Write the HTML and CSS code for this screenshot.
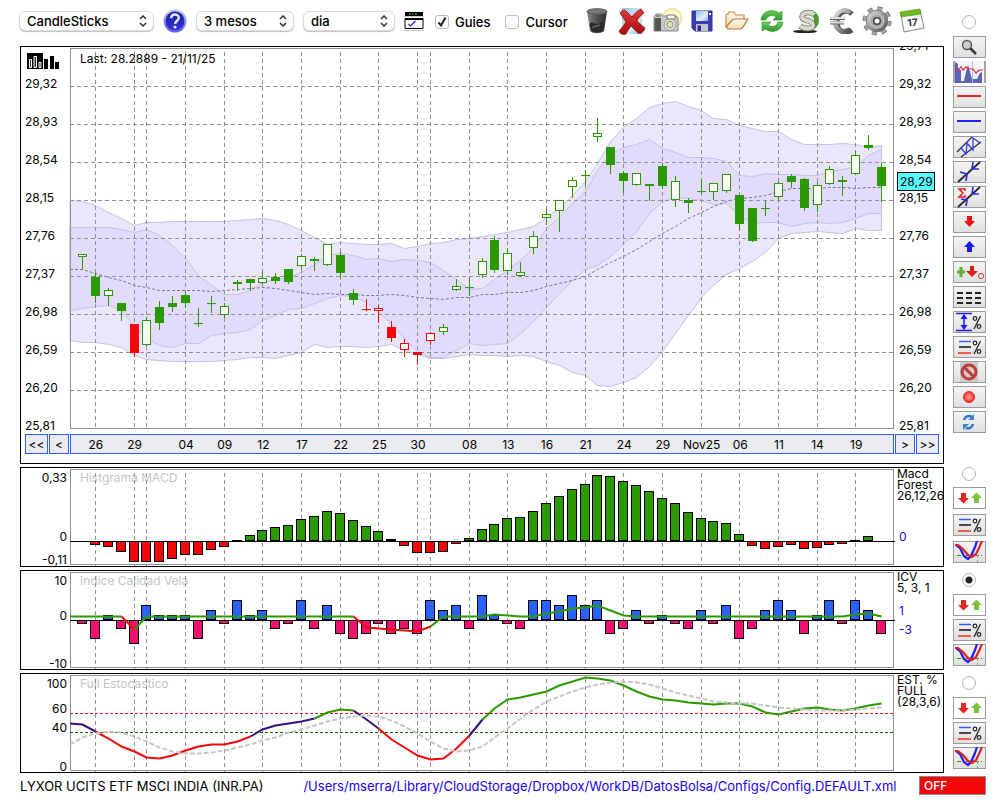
FILE: index.html
```html
<!DOCTYPE html>
<html lang="ca">
<head>
    <meta charset="utf-8">
    <title>LYXOR UCITS ETF MSCI INDIA (INR.PA)</title>
    <link rel="stylesheet" href="styles.css">
</head>
<body>

<!-- shared icons -->
<svg class="defs" aria-hidden="true">
    <defs>
        <linearGradient id="gHelp" x1="0" y1="0" x2="0" y2="1"><stop offset="0" stop-color="#1c1c9c"/><stop offset="1" stop-color="#3434d8"/></linearGradient>
        <linearGradient id="gHelpRim" x1="0" y1="0" x2="0" y2="1"><stop offset="0" stop-color="#c4c8f4"/><stop offset="1" stop-color="#5c60ee"/></linearGradient>
        <linearGradient id="gTrash" x1="0" y1="0" x2="1" y2="0"><stop offset="0" stop-color="#8a8a8a"/><stop offset=".5" stop-color="#505050"/><stop offset="1" stop-color="#2c2c2c"/></linearGradient>
        <linearGradient id="gSky" x1="0" y1="0" x2="1" y2="1"><stop offset="0" stop-color="#8fc0f5"/><stop offset=".6" stop-color="#e2f0fd"/><stop offset="1" stop-color="#7fb2ee"/></linearGradient>
        <linearGradient id="gRed" x1="0" y1="0" x2="0" y2="1"><stop offset="0" stop-color="#e33a3a"/><stop offset="1" stop-color="#a80c10"/></linearGradient>
        <linearGradient id="gGreen" x1="0" y1="0" x2="0" y2="1"><stop offset="0" stop-color="#6cd05a"/><stop offset="1" stop-color="#2a9a2c"/></linearGradient>
        <linearGradient id="gSteel" x1="0" y1="0" x2="1" y2="1"><stop offset="0" stop-color="#e8e8e8"/><stop offset=".5" stop-color="#9a9a9a"/><stop offset="1" stop-color="#4a4a4a"/></linearGradient>
        <linearGradient id="gFolder" x1="0" y1="0" x2="0" y2="1"><stop offset="0" stop-color="#fffaf0"/><stop offset="1" stop-color="#f7dcae"/></linearGradient>
        <radialGradient id="gDot"><stop offset="0" stop-color="#ffaaaa"/><stop offset=".6" stop-color="#ff5a5a"/><stop offset="1" stop-color="#f02828"/></radialGradient>

        <symbol id="arrows" viewBox="0 0 33 22">
            <path d="M8 6h5v5h3l-5.500 5.500L5 11h3z" fill="#e3261c"/>
            <path d="M21 16v-5h-3l5.500-5.500L29 11h-3v5z" fill="#7cc33c"/>
        </symbol>
        <symbol id="levels" viewBox="0 0 33 22">
            <path d="M6 5.500h12" stroke="#2f62f2" stroke-width="1.500"/>
            <path d="M6 11h12" stroke="#111" stroke-width="1.500"/>
            <path d="M5 17h13" stroke="#f35a4a" stroke-width="2"/>
            <g fill="none" stroke="#222" stroke-width="1.200"><circle cx="22" cy="7" r="1.800"/><circle cx="26" cy="15.500" r="1.800"/><path d="M27.500 5l-6.500 13"/></g>
        </symbol>
        <symbol id="curves" viewBox="0 0 33 22">
            <path d="M4 14.500h26" stroke="#2a9a10" stroke-dasharray="4 2 1 2"/>
            <path d="M24.500 9v13" stroke="#999" stroke-dasharray="3 2"/>
            <path d="M3 4l4 3 4 8 4 3 3-3 4-9 2-6" fill="none" stroke="#2020f0" stroke-width="2.200"/>
            <path d="M2 4h3l5 4 5 6 4 2 4-3 3-6 3-7" fill="none" stroke="#e02222" stroke-width="2.200"/>
        </symbol>
    </defs>
</svg>

<div class="page">
    <div class="row">
        <div class="left">
            <div class="toolbar">
                <select class="sel sel-type" aria-label="Tipus"><option>CandleSticks</option></select>
                <button class="ico help" title="Ajuda">
                    <svg width="24" height="24" viewBox="0 0 24 24"><circle cx="12" cy="12" r="11.500" fill="url(#gHelpRim)"/><circle cx="12" cy="12" r="9.500" fill="url(#gHelp)"/><path d="M8.200 9.200c0-5 7.800-4.800 7.600-.2-.1 2.700-3.500 2.800-3.700 5.800" fill="none" stroke="#e6e8ff" stroke-width="2.400"/><circle cx="12" cy="18" r="1.600" fill="#e6e8ff"/></svg>
                </button>
                <select class="sel sel-range" aria-label="Rang"><option>3 mesos</option></select>
                <select class="sel sel-unit" aria-label="Unitat"><option>dia</option></select>
                <button class="ico win" title="Finestra">
                    <svg width="20" height="20" viewBox="0 0 20 20"><path d="M1 1h18v4H1z" fill="#000"/><path d="M5 3h4m2 0h3" stroke="#23b023" stroke-width="1.500" stroke-dasharray="2 1"/><path d="M0 5.500h20" stroke="#c8c8c8"/><path d="M1 7.500h18v10H1z" fill="#fff" stroke="#000"/><path d="M1 8h18" stroke="#000" stroke-width="2"/><path d="M4.500 13l2 2 2-2 3-3" fill="none" stroke="#2020f0" stroke-width="1.200"/><path d="M0 19.500h20" stroke="#c8c8c8"/></svg>
                </button>
                <label class="check"><input type="checkbox" checked>Guies</label>
                <label class="check"><input type="checkbox">Cursor</label>
                <div class="actions">
                    <button class="ico" title="Paperera">
                        <svg width="28" height="28" viewBox="0 0 28 28"><path d="M4 4l3 20c2 3 11 3 14 0l3-20z" fill="url(#gTrash)"/><ellipse cx="14" cy="4.500" rx="10" ry="2.800" fill="#777" stroke="#5a5a5a"/><path d="M6.500 17c4-4 7 2 9 0s4-4 6 0l-1.500 6.500c-3 2.500-10 2.500-12 0z" fill="#2a2a2a"/><path d="M9 21c3-3 5-1 8-3" stroke="#888" fill="none"/></svg>
                    </button>
                    <button class="ico" title="Esborra">
                        <svg width="28" height="28" viewBox="0 0 28 28"><path d="M4 1h20v26H4z" fill="url(#gSky)"/><path d="M2 6c3-4 5-3 7-1l5 5c2-3 5-6 9-8l3 4c-3 2-6 5-7 8 3 3 5 5 8 7-1 4-4 6-7 5l-7-7c-2 3-4 5-5 8-3 1-6 0-7-3 3-3 5-6 7-9-2-3-4-6-6-9z" fill="url(#gRed)" stroke="#8c0a0c" stroke-width=".8"/></svg>
                    </button>
                    <button class="ico" title="Captura">
                        <svg width="30" height="28" viewBox="0 0 30 28"><circle cx="20" cy="11" r="9.500" fill="#faf8cf" stroke="#e9e59c" stroke-width="1.500"/><path d="M2 10l2-3h5l1 2h14l2 2v13H2z" fill="#c9c9c9" stroke="#8a8a84"/><path d="M2.500 11H9v13H2.500z" fill="#55544f"/><path d="M4 8h4v2H4z" fill="#8a8a8a"/><circle cx="18" cy="17.500" r="5.800" fill="#e6e6e6" stroke="#999"/><circle cx="18" cy="17.500" r="3.200" fill="#e4e0b0" stroke="#8a8a7a"/><path d="M15 8h8v4h-8z" fill="#f6f6e6" stroke="#77776e"/></svg>
                    </button>
                    <button class="ico" title="Desa">
                        <svg width="22" height="22" viewBox="0 0 22 22"><path d="M1 1h20v20H4l-3-3z" fill="#3c3cb4" stroke="#2c2c8e"/><path d="M5 1h12v10H5z" fill="url(#gSky)"/><path d="M5 14h12v7H5z" fill="#c4c4cc"/><path d="M6.500 15.500h3.500V21H6.500z" fill="#2c2c8e"/><path d="M18 3h2v2h-2z" fill="#fff"/></svg>
                    </button>
                    <button class="ico" title="Obre">
                        <svg width="24" height="20" viewBox="0 0 24 20"><path d="M1 16V4l2-1 1-2h5l2 3h8v4" fill="url(#gFolder)" stroke="#c08a4c" stroke-width="1.200"/><path d="M1 16l6-7 3-1h13l-5 8-2 2H3z" fill="url(#gFolder)" stroke="#b87c3c" stroke-width="1.200"/></svg>
                    </button>
                    <button class="ico" title="Refresca">
                        <svg width="24" height="24" viewBox="0 0 24 24"><g fill="url(#gGreen)" stroke="#2c8e2e" stroke-width=".6"><path d="M1 11C2 2 12-1 19 4l3-2v9h-9l3-3C12 5 7 7 6 11z"/><path d="M23 13c-1 9-11 12-18 7l-3 2v-9h9l-3 3c4 3 9 1 10-3z"/></g></svg>
                    </button>
                    <button class="ico" title="Dolar">
                        <svg width="28" height="26" viewBox="0 0 28 26"><ellipse cx="12" cy="23.500" rx="12" ry="1.600" fill="#222"/><circle cx="17" cy="12.500" r="9.500" fill="#e9efe2"/><path d="M15 2.500c9-1 13 7 10 14-2 4-6 6-9 6 6-5 8-13-1-20z" fill="#4c9630"/><path d="M21 7c-3-4-12-3-12 2 0 4 11 3 11 8 0 4-8 5-13 1" fill="none" stroke="#6c6c62" stroke-width="5.500"/><path d="M21 7c-3-4-12-3-12 2 0 4 11 3 11 8 0 4-8 5-13 1" fill="none" stroke="#d8d8cc" stroke-width="4"/></svg>
                    </button>
                    <button class="ico" title="Euro">
                        <svg width="26" height="26" viewBox="0 0 26 26"><path d="M21 5C15-1 6 4 6 13s8 13 15 8" fill="none" stroke="#5c5454" stroke-width="5" transform="translate(2 1)"/><path d="M21 5C15-1 6 4 6 13s8 13 15 8" fill="none" stroke="url(#gSteel)" stroke-width="4.500"/><path d="M1 10.500h15M1 15h14" stroke="#666" stroke-width="3"/><path d="M1 10h15M1 14.500h14" stroke="#dedede" stroke-width="2.200"/></svg>
                    </button>
                    <button class="ico" title="Opcions">
                        <svg width="30" height="30" viewBox="0 0 30 30"><circle cx="15" cy="15" r="12" fill="none" stroke="#666" stroke-width="5" stroke-dasharray="4.700 4.730"/><circle cx="15" cy="15" r="12" fill="none" stroke="#a6a6a6" stroke-width="3.400" stroke-dasharray="4.200 5.230" stroke-dashoffset="-.25"/><circle cx="15" cy="15" r="10.800" fill="url(#gSteel)" stroke="#6a6a6a" stroke-width=".8"/><circle cx="15" cy="15" r="7" fill="#a8a8a8" stroke="#c9c9c9"/><circle cx="15" cy="15" r="3.300" fill="#fff" stroke="#444" stroke-width="1.600"/></svg>
                    </button>
                    <button class="ico" title="Calendari">
                        <svg width="26" height="26" viewBox="0 0 26 26"><path d="M2 6l19-4 4 18-20 4z" fill="#fafafa" stroke="#888"/><path d="M1 4l20-3 1 5L2 9z" fill="#6cbb22" stroke="#4f9212" stroke-width=".6"/><text x="13.500" y="18" class="caltext" transform="rotate(-6 13 14)">17</text></svg>
                    </button>
                </div>
            </div>
            <div class="panel">
                <button class="mini" title="Volum">
                    <svg width="33" height="16" viewBox="0 0 33 16"><path d="M0 0h16v16H0zM17 6h4v10h-4zM23 3h4v13h-4zM28 9h4v7h-4z" fill="#000"/><path d="M2.500 6.500h2v8h-2zM7 3.500h2.500v11H7zM12 9.500h2v5h-2z" fill="#333" stroke="#fff"/></svg>
                </button>
                <svg class="plot" id="price"></svg>
                <div class="nav">
                    <button class="go wide">&lt;&lt;</button>
                    <button class="go">&lt;</button>
                    <svg class="dates" id="dates"></svg>
                    <button class="go">&gt;</button>
                    <button class="go wide">&gt;&gt;</button>
                </div>
            </div>
        </div>
        <div class="tools tools-main">
            <input type="radio" name="panel" aria-label="Preu">
            <button class="tool" title="Zoom"><svg viewBox="0 0 33 22"><path d="M17 12l6 6" stroke="#333" stroke-width="2.500"/><circle cx="14" cy="9" r="4.500" fill="#c9cdd0" stroke="#555" stroke-width="1.400"/></svg></button>
            <button class="tool" title="Volum"><svg viewBox="0 0 33 22"><path d="M1 0h31v22H1z" fill="#f6f3fb"/><path d="M1.500 0v22M31.500 0v22" stroke="#aaa"/><path d="M2 22V1l3 2v5l3 1v11h3l2-9 2-7 4 14h5l3-6 2-1v11z" fill="#5c62b4"/><path d="M19.500 0v22" stroke="#b6b4d8"/><path d="M2 8h4l2-2 2 3 3-3 3 2h4l3 4 3-3h4" fill="none" stroke="#d8262a" stroke-width="1.200"/></svg></button>
            <button class="tool" title="Linia vermella"><svg viewBox="0 0 33 22"><path d="M4 10h24" stroke="#e02a2a" stroke-width="2"/></svg></button>
            <button class="tool" title="Linia blava"><svg viewBox="0 0 33 22"><path d="M4 10h24" stroke="#2222f2" stroke-width="2"/></svg></button>
            <button class="tool" title="Canal"><svg viewBox="0 0 33 22"><path d="M4 16L19 1M8 21L28 6" stroke="#2c2c55" stroke-width="1.300"/><path d="M8 12l5 6 1-11 6 7V2l7 5" fill="none" stroke="#3a3ae0" stroke-width="1.300"/></svg></button>
            <button class="tool" title="Tendencia"><svg viewBox="0 0 33 22"><path d="M5 21L27 1" stroke="#222" stroke-width="1.700"/><path d="M7 11l7 2-1 7M26 8l-7 0 1-7" fill="none" stroke="#2a2ae0" stroke-width="1.700"/></svg></button>
            <button class="tool" title="Suma"><svg viewBox="0 0 33 22"><path d="M5 21L27 1" stroke="#222" stroke-width="1.700"/><path d="M8 13l6 1-1 6M26 8l-7 0 1-7" fill="none" stroke="#2a2ae0" stroke-width="1.700"/><path d="M12 5V3H6l4 4-4 4h6V9" fill="none" stroke="#e02222" stroke-width="1.500"/></svg></button>
            <button class="tool" title="Baixa"><svg viewBox="0 0 33 22"><path d="M14 5h5v5h3l-5.500 6L11 10h3z" fill="#f01010"/></svg></button>
            <button class="tool" title="Puja"><svg viewBox="0 0 33 22"><path d="M14 16v-5h-3l5.500-6L22 11h-3v5z" fill="#1a1af5"/></svg></button>
            <button class="tool" title="Senyals"><svg viewBox="0 0 33 22"><path d="M4 11h8M8 6v10" stroke="#5fae30" stroke-width="3"/><path d="M17 5h4v5h4l-6 6-6-6h4z" fill="#d8201a"/><circle cx="28" cy="15" r="2.500" fill="#fff" stroke="#e02222"/></svg></button>
            <button class="tool" title="Llista"><svg viewBox="0 0 33 22"><path d="M4 7h25M4 12h25M4 17h25" stroke="#222" stroke-width="2" stroke-dasharray="6 3"/></svg></button>
            <button class="tool" title="Distancia"><svg viewBox="0 0 33 22"><path d="M3 2.500h16M3 19.500h16M11 4v14" stroke="#1a1af0" stroke-width="1.500"/><path d="M11 3l3.500 5h-7zM11 19l3.500-5h-7z" fill="#1a1af0"/><g fill="none" stroke="#222" stroke-width="1.200"><circle cx="22" cy="7.500" r="1.800"/><circle cx="26" cy="15.500" r="1.800"/><path d="M27.500 5l-6.500 13"/></g></svg></button>
            <button class="tool" title="Nivells"><svg><use href="#levels"/></svg></button>
            <button class="tool" title="Prohibit"><svg viewBox="0 0 33 22"><path d="M7 1h18v20H7z" fill="#ccc8cc"/><circle cx="16" cy="11" r="7" fill="#d8c4c4" stroke="#bc3c3c" stroke-width="3"/><path d="M11 6l10 10" stroke="#bc3c3c" stroke-width="3"/></svg></button>
            <button class="tool" title="Grava"><svg viewBox="0 0 33 22"><circle cx="16" cy="11" r="5.500" fill="url(#gDot)" stroke="#e82a2a"/></svg></button>
            <button class="tool" title="Actualitza"><svg viewBox="0 0 33 22"><g fill="none" stroke="#2e78cc" stroke-width="2.500"><path d="M11 9c1-4 5-5 8-3"/><path d="M20 13c-1 4-4 5-7 4"/></g><path d="M15 9h6V3zM16 13h-6v6z" fill="#3c86d8"/></svg></button>
        </div>
    </div>

    <div class="row">
        <div class="left panel"><svg class="plot sub" id="macd"></svg></div>
        <div class="tools tools-loose">
            <input type="radio" name="panel" aria-label="MACD">
            <button class="tool white" title="Senyals"><svg><use href="#arrows"/></svg></button>
            <button class="tool" title="Nivells"><svg><use href="#levels"/></svg></button>
            <button class="tool" title="Corbes"><svg><use href="#curves"/></svg></button>
        </div>
    </div>

    <div class="row">
        <div class="left panel"><svg class="plot sub" id="icv"></svg></div>
        <div class="tools">
            <input type="radio" name="panel" aria-label="ICV" checked>
            <button class="tool white" title="Senyals"><svg><use href="#arrows"/></svg></button>
            <button class="tool" title="Nivells"><svg><use href="#levels"/></svg></button>
            <button class="tool" title="Corbes"><svg><use href="#curves"/></svg></button>
        </div>
    </div>

    <div class="row">
        <div class="left panel"><svg class="plot sub" id="stoch"></svg></div>
        <div class="tools">
            <input type="radio" name="panel" aria-label="Estocastico">
            <button class="tool white" title="Senyals"><svg><use href="#arrows"/></svg></button>
            <button class="tool" title="Nivells"><svg><use href="#levels"/></svg></button>
            <button class="tool" title="Corbes"><svg><use href="#curves"/></svg></button>
        </div>
    </div>

    <div class="footer">
        <span>LYXOR UCITS ETF MSCI INDIA (INR.PA)</span>
        <span class="path">/Users/mserra/Library/CloudStorage/Dropbox/WorkDB/DatosBolsa/Configs/Config.DEFAULT.xml</span>
        <button class="off">OFF</button>
    </div>
</div>

<script src="chart.js"></script>
</body>
</html>
```
FILE: styles.css
```css
* {
    box-sizing: border-box;
}

body {
    margin: 0;
    background: #fff;
    color: #000;
    font-family: Inter, "Liberation Sans", sans-serif;
    font-size: 12px;
}

button {
    padding: 0;
    font: inherit;
    color: inherit;
    cursor: pointer;
}

.defs {
    position: absolute;
    width: 0;
    height: 0;
}

.page {
    padding: 0 14px 0 20px;
}

.row {
    display: flex;
    gap: 9px;
    margin-bottom: 3px;
}

.left {
    flex: 1;
    min-width: 0;
}

/* ---- toolbar ---- */
.toolbar {
    display: flex;
    align-items: center;
    gap: 9px;
    height: 46px;
    margin-left: -1px;
    padding-bottom: 4px;
}

.sel {
    appearance: none;
    height: 20px;
    padding: 0 7px;
    border: 1px solid #dcdcdc;
    border-radius: 6px;
    box-shadow: 0 1px 1px rgba(0, 0, 0, 0.25);
    color: #000;
    font: 500 13px Inter, sans-serif;
    background: #fff url("data:image/svg+xml,%3Csvg xmlns='http://www.w3.org/2000/svg' width='8' height='12' fill='none' stroke='%23333' stroke-width='1.5'%3E%3Cpath d='M1 4l3-3 3 3M1 8l3 3 3-3'/%3E%3C/svg%3E") no-repeat right 6px center;
}

.sel-type {
    width: 135px;
}

.sel-range {
    width: 98px;
}

.sel-unit {
    width: 92px;
}

.ico {
    display: flex;
    align-items: center;
    justify-content: center;
    border: 0;
    background: none;
}

.check {
    display: flex;
    align-items: center;
    gap: 6px;
    margin-left: 2px;
    padding-top: 2px;
    font-size: 13px;
    font-weight: 500;
}

.check + .check {
    margin-left: 6px;
}

.check input {
    appearance: none;
    width: 14px;
    height: 14px;
    margin: 0;
    border: 1px solid #bbb;
    border-radius: 3px;
    background: #fff;
}

.check input:checked {
    background: #fff url("data:image/svg+xml,%3Csvg xmlns='http://www.w3.org/2000/svg' width='12' height='12' fill='none' stroke='%23222' stroke-width='2'%3E%3Cpath d='M2.500 6.500l2.500 3 4.500-8'/%3E%3C/svg%3E") no-repeat center;
}

.actions {
    display: flex;
    margin-left: 3px;
}

.actions .ico {
    width: 35px;
}

.caltext {
    font-size: 10px;
    font-weight: 700;
    text-anchor: middle;
    fill: #333;
}

/* ---- panels ---- */
.panel {
    position: relative;
    border: 1px solid #000;
}

.mini {
    position: absolute;
    left: 6px;
    top: 6px;
    border: 0;
    background: none;
}

.mini svg {
    display: block;
}

.plot {
    display: block;
    width: 100%;
    height: 387px;
}

.plot.sub {
    height: 98px;
}

.plot text,
.dates text {
    font-size: 12px;
}

.nav {
    display: flex;
    gap: 1px;
    padding: 0 4px 9px;
}

.go,
.dates {
    height: 20px;
    border: 1px solid #2962ff;
    background: #ebebf0;
}

.go {
    width: 20px;
}

.go.wide {
    width: 23px;
}

.dates {
    display: block;
    flex: 1;
    min-width: 0;
}

/* ---- side tools ---- */
.tools {
    display: flex;
    flex-direction: column;
    gap: 3px;
    width: 33px;
    padding-top: 3px;
}

.tools-main {
    padding-top: 15px;
}

.tools-loose {
    gap: 5px;
    padding-top: 0;
}

.tools input {
    appearance: none;
    width: 14px;
    height: 14px;
    margin: 0 auto 4px 9px;
    border: 1px solid #b4b4b4;
    border-radius: 50%;
    background: #fff;
}

.tools-loose input {
    margin-bottom: 1px;
}

.tools input:checked {
    background: radial-gradient(circle, #222 3px, #fff 4px);
}

.tool {
    height: 22px;
    border: 1px solid #9c9c9c;
    background: linear-gradient(#f4f4f4, #e0e0e0);
}

.tool.white {
    background: #fff;
}

/* icons run over the button's border */
.tool svg {
    display: block;
    width: 33px;
    height: 22px;
    margin: -1px;
}

/* ---- footer ---- */
.footer {
    display: flex;
    align-items: center;
    height: 19px;
    font-size: 13px;
    white-space: nowrap;
}

.path {
    margin-left: 40px;
    color: #1a00f5;
}

.off {
    width: 67px;
    height: 19px;
    margin-left: auto;
    padding-left: 4px;
    border: 1px solid #8a8a8a;
    background: #f20808;
    color: #fff;
    font-size: 12px;
    font-weight: 500;
    text-align: left;
}
```
FILE: chart.js
```js
var NS = "http://www.w3.org/2000/svg";
var AXIS = 49;      // width of the left and right axis columns
var GREEN = "#2a9a00", RED = "#f20808", BLUE = "#2962ff", PINK = "#f01070", INDIGO = "#32147c";

var guides = [1, 4, 5, 8, 11, 14, 17, 20, 23, 26, 27, 30, 33, 36, 39, 42, 45, 48, 51, 54, 57, 60];
var days = {1: "26", 4: "29", 8: "04", 11: "09", 14: "12", 17: "17", 20: "22", 23: "25", 26: "30", 30: "08", 33: "13",
    36: "16", 39: "21", 42: "24", 45: "29", 48: "Nov25", 51: "06", 54: "11", 57: "14", 60: "19"};
var prices = ["29,71", "29,32", "28,93", "28,54", "28,15", "27,76", "27,37", "26,98", "26,59", "26,20", "25,81"];

// kind (upper case = filled), body top, body bottom, high, low
var candles = [
    ["g",254,257,254,270],["G",277,296,273,303],["g",290,296,288,306],["G",303,311,303,321],["R",324,353,324,357],["g",320,345,317,346],
    ["G",307,323,301,330],["G",303,307,296,312],["G",295,303,292,308],["G",323,324,308,327],["G",303,304,296,313],["g",306,315,303,318],
    ["G",282,284,280,291],["G",279,283,279,291],["g",278,283,271,284],["G",277,281,273,284],["G",269,282,269,284],["g",256,266,254,269],
    ["G",259,261,257,271],["g",244,265,244,266],["G",255,273,252,278],["G",293,300,289,305],["R",309,310,299,311],["r",308,311,305,323],
    ["R",327,338,321,342],["r",343,350,339,357],["R",352,355,352,365],["r",333,341,332,345],["g",327,332,324,335],["g",286,290,279,291],
    ["G",287,288,277,296],["g",261,275,258,278],["G",240,270,236,273],["g",253,271,248,275],["g",272,276,262,277],["g",236,248,231,254],
    ["g",214,218,209,225],["g",200,211,200,232],["g",180,187,177,198],["G",175,176,170,186],["g",133,137,118,142],["G",147,165,147,174],
    ["G",173,181,171,193],["g",173,185,173,186],["G",184,186,184,201],["G",166,186,163,189],["g",181,200,176,207],["G",200,203,198,213],
    ["G",191,192,179,194],["g",183,192,183,200],["g",174,191,174,193],["G",195,224,195,230],["G",208,241,208,242],["G",208,209,201,216],
    ["g",183,197,181,200],["G",176,182,174,188],["G",179,208,178,211],["g",185,205,182,212],["g",169,184,166,185],["G",180,182,176,196],
    ["g",155,174,151,175],["G",145,148,135,150],["G",167,186,163,202]
];

// bands: the first value sits on the left edge of the plot
var outerTop = [200,201,205,212,218,225,222,222,221,221,221,221,221,220,219,218,220,224,230,237,244,242,243,244,244,243,248,246,243,242,239,238,236,234,232,229,226,217,207,195,181,163,141,127,118,107,103,101,106,110,118,119,125,128,131,131,139,144,144,144,143,144,147,145];
var innerTop = [227,227,227,227,229,232,229,235,245,258,275,285,294,294,290,282,279,277,272,264,255,253,255,259,258,261,259,260,262,270,279,289,288,279,270,260,247,228,217,203,191,170,154,147,144,139,148,152,157,157,158,161,175,176,173,174,174,175,175,171,169,167,155,149];
var outerLow = [340,342,342,344,347,355,359,360,361,361,361,361,360,359,357,357,358,355,352,344,347,346,346,347,346,344,350,354,358,358,356,354,355,355,356,355,356,361,365,372,375,385,386,382,377,366,351,333,315,297,285,274,268,261,252,238,233,232,231,232,233,228,230,230];
var innerLow = [310,308,306,305,310,326,338,345,347,343,343,335,333,332,329,320,315,309,308,303,298,295,296,302,311,324,338,351,357,357,350,343,345,344,343,333,321,307,293,280,269,265,256,244,231,213,201,197,198,200,204,203,215,223,222,222,226,223,222,223,222,218,213,213];
var average = [269,269,273,277,280,285,287,290,290,290,290,291,290,289,288,287,288,290,292,294,293,294,294,295,295,294,295,297,298,299,297,297,294,294,292,292,290,286,283,280,276,269,262,256,249,241,233,226,218,212,206,201,198,197,195,191,188,188,188,187,187,188,187,187];

// bar end of every MACD bar, 541 is the zero line
var macd = [541,545,547,552,562,562,562,559,555,555,550,547,540,535,530,527,525,519,516,511,513,520,526,531,539,546,553,553,552,544,538,529,524,518,517,511,503,496,489,484,475,476,481,485,491,498,503,512,518,521,523,534,546,549,547,545,549,548,545,544,540,536];
var icv = [-1,-4,1,-2,-5,3,1,1,1,-4,2,-1,4,1,2,-2,-1,4,-2,3,-3,-4,-3,-1,-3,-2,-3,4,2,3,-2,5,1,-1,-2,4,4,3,5,3,4,-3,-2,2,-1,1,-1,-2,2,-1,3,-4,-2,2,4,2,-3,1,4,-1,4,2,-3];
var icvLine = [616,616,616,616,616,629,616,616,616,616,616,616,616,616,616,616,616,616,616,616,616,616,616,627,628,629,630,631,626,616,616,616,616,614,615,616,616,613,611,608,607,605,610,615,616,616,616,616,616,616,616,616,616,616,616,616,616,616,616,616,616,614,613,616];
var stoch = [723,724,731,738,746,751,757,758,755,750,746,744,744,741,736,729,725,723,721,718,712,709,710,719,728,739,747,755,759,758,748,735,719,708,699,697,694,691,685,681,677,678,680,685,691,696,699,700,702,703,704,703,703,706,712,714,711,708,707,709,710,708,705,703];
var stochSlow = [744,737,733,731,732,736,741,747,751,753,753,752,750,747,744,740,737,732,729,725,721,718,716,715,716,720,726,733,741,748,751,750,746,737,728,718,709,701,696,691,687,684,682,681,682,684,688,692,695,698,701,702,703,703,705,707,708,709,710,710,710,709,708,707];

var svg, width;

function add(tag, attrs, text) {
    var el = document.createElementNS(NS, tag);
    for (var k in attrs) el.setAttribute(k, attrs[k]);
    if (text) el.textContent = text;
    svg.appendChild(el);
    return el;
}

function start(id, top, height) {
    svg = document.getElementById(id);
    svg.innerHTML = "";
    width = svg.clientWidth;
    svg.setAttribute("viewBox", "0 " + top + " " + width + " " + height);
}

// centre of day i
function px(i) {
    return AXIS + Math.round(12 + i * (width - 2 * AXIS - 25) / 62) + 0.5;
}

function points(list, from, to) {
    var out = [];
    for (var n = from || 0; n <= (to === undefined ? list.length - 1 : to); n++) {
        out.push((n === 0 ? AXIS : px(n - 1)) + "," + (list[n] + 0.5));
    }
    return out;
}

function line(x1, y1, x2, y2, color, dash) {
    var l = add("line", {x1: x1, y1: y1, x2: x2, y2: y2, stroke: color});
    if (dash) l.setAttribute("stroke-dasharray", dash);
}

function curve(list, color, w, dash, from, to) {
    var c = add("polyline", {points: points(list, from, to).join(" "), fill: "none", stroke: color, "stroke-width": w});
    if (dash) c.setAttribute("stroke-dasharray", dash);
}

function frame(top, bottom) {
    guides.forEach(function (i) {
        line(px(i), top + 4, px(i), bottom + 2, "#909090", "4 3");
    });
    add("rect", {x: AXIS + 0.5, y: top + 0.5, width: width - 2 * AXIS - 1, height: bottom - top, fill: "none", stroke: "#909090"});
}

function label(x, y, text, anchor, color) {
    add("text", {x: x, y: y + 4, "text-anchor": anchor || "start", fill: color || "#000"}, text);
}

function bar(i, top, bottom, color) {
    add("rect", {x: px(i) - 5, y: top + 0.5, width: 9, height: Math.max(bottom - top, 1), fill: color, stroke: "#000"});
}

function band(upper, lower, color) {
    add("polygon", {points: points(upper).concat(points(lower).reverse()).join(" "), fill: color, stroke: "#c6c0e2"});
}

function drawPrice() {
    start("price", 47, 387);
    band(outerTop, outerLow, "#ebe5fe");
    band(innerTop, innerLow, "#e3dbfd");
    curve(average, "#78708e", 1, "3 2");
    var right = width - AXIS;
    prices.forEach(function (p, n) {
        var y = 48 + n * 38;
        if (n > 0) {
            label(4, y - 2, p);
            if (n < 10) line(AXIS, y + 0.5, right + 2, y + 0.5, "#909090", "4 3");
        }
        label(right + 5, y - 2, p);
    });
    frame(48, 428);
    candles.forEach(function (c, i) {
        var color = c[0].toLowerCase() === "g" ? GREEN : RED;
        var filled = c[0] === c[0].toUpperCase();
        line(px(i), c[3], px(i), c[4], color);
        add("rect", {x: px(i) - 4, y: c[1] + 0.5, width: 8, height: Math.max(c[2] - c[1] - 1, 0.1), fill: filled ? color : "#fff", stroke: color});
    });
    label(59, 59, "Last: 28.2889 - 21/11/25");
    add("rect", {x: right + 3.5, y: 172.5, width: 37, height: 18, fill: "#5ff", stroke: "#000"});
    label(right + 6, 182, "28,29");
}

function drawDates() {
    start("dates", 0, 18);
    for (var i in days) {
        add("text", {x: 12 + i * (width - 23) / 62, y: 14, "text-anchor": "middle"}, days[i]);
    }
}

function drawMacd() {
    start("macd", 468, 98);
    label(59, 478, "Histgrama MACD", "start", "#c4c4c4");
    frame(469, 564);
    macd.forEach(function (v, i) {
        if (v < 541) bar(i, v, 540, GREEN);
        if (v > 541) bar(i, 541, v - 1, RED);
    });
    line(AXIS, 541.5, width - AXIS + 1, 541.5, "#000");
    label(46, 478, "0,33", "end");
    label(46, 537, "0", "end");
    label(46, 560, "-0,11", "end");
    legend(474, ["Macd", "Forest", "26,12,26"]);
    label(width - AXIS + 5, 537, "0", "start", "#1a00f5");
}

function legend(y, lines) {
    lines.forEach(function (t, n) {
        label(width - AXIS + 3, y + n * 11, t);
    });
}

function drawIcv() {
    start("icv", 571, 98);
    label(59, 581, "Indice Calidad Vela", "start", "#c4c4c4");
    frame(572, 667);
    icv.forEach(function (v, i) {
        if (v > 0) bar(i, 620 - 5 * v, 619, BLUE);
        else bar(i, 620, 618 - 5 * v, PINK);
    });
    line(AXIS, 620.5, width - AXIS + 1, 620.5, "#000");
    curve(icvLine, GREEN, 2, "", 0, 4);
    curve(icvLine, RED, 2, "", 4, 5);
    curve(icvLine, GREEN, 2, "", 5, 22);
    curve(icvLine, RED, 2, "", 22, 28);
    curve(icvLine, GREEN, 2, "", 28);
    label(46, 581, "10", "end");
    label(46, 616, "0", "end");
    label(46, 664, "-10", "end");
    legend(577, ["ICV", "5, 3, 1"]);
    label(width - AXIS + 5, 611, "1", "start", "#1a00f5");
    label(width - AXIS + 5, 630, "-3", "start", "#1a00f5");
}

function drawStoch() {
    start("stoch", 674, 98);
    label(59, 684, "Full Estocastico", "start", "#c4c4c4");
    frame(675, 770);
    line(AXIS, 713.5, width - AXIS + 1, 713.5, "#f20808", "3 2");
    line(AXIS, 732.5, width - AXIS + 1, 732.5, "#146400", "3 2");
    curve(stoch, INDIGO, 2, "", 0, 2);
    curve(stoch, RED, 2, "", 2, 14);
    curve(stoch, INDIGO, 2, "", 14, 19);
    curve(stoch, GREEN, 2, "", 19, 22);
    curve(stoch, INDIGO, 2, "", 22, 24);
    curve(stoch, RED, 2, "", 24, 31);
    curve(stoch, INDIGO, 2, "", 31, 32);
    curve(stoch, GREEN, 2, "", 32);
    curve(stochSlow, "#c6c6c6", 2, "5 2");
    label(46, 684, "100", "end");
    label(46, 709, "60", "end");
    label(46, 728, "40", "end");
    label(46, 767, "0", "end");
    legend(680, ["EST. %", "FULL", "(28,3,6)"]);
}

function draw() {
    drawPrice();
    drawDates();
    drawMacd();
    drawIcv();
    drawStoch();
}

draw();
window.addEventListener("resize", draw);
```
